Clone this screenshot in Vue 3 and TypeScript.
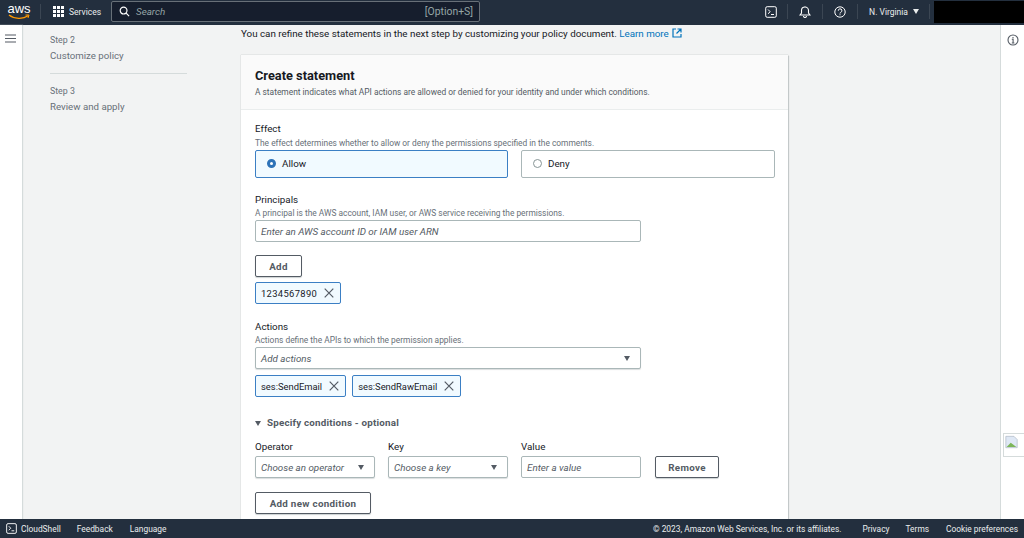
<script setup lang="ts">
const principals: string[] = ['1234567890']
const actions: string[] = ['ses:SendEmail', 'ses:SendRawEmail']
</script>

<template>
  <div class="page">
    <header class="top">
      <div class="logo">
        <span class="logo-text">aws</span>
        <svg class="smile" viewBox="0 0 22 6" width="22" height="6"><path d="M1 1c5 4 14 4.500 19 .8" fill="none" stroke="#f90" stroke-width="1.300"/><path d="M17.500 1h3.500l-1 3" fill="none" stroke="#f90" stroke-width="1"/></svg>
      </div>
      <span class="sep first"></span>
      <svg class="grid-ic" viewBox="0 0 11 11" width="11" height="11" fill="#fff"><rect x="0" y="0" width="3" height="3"/><rect x="4" y="0" width="3" height="3"/><rect x="8" y="0" width="3" height="3"/><rect x="0" y="4" width="3" height="3"/><rect x="4" y="4" width="3" height="3"/><rect x="8" y="4" width="3" height="3"/><rect x="0" y="8" width="3" height="3"/><rect x="4" y="8" width="3" height="3"/><rect x="8" y="8" width="3" height="3"/></svg>
      <span class="services">Services</span>
      <div class="search">
        <svg viewBox="0 0 12 12" width="11" height="11" fill="none" stroke="#fff" stroke-width="1.300"><circle cx="5" cy="5" r="3.700"/><path d="M7.800 7.800 11 11"/></svg>
        <span class="search-ph">Search</span>
        <span class="shortcut">[Option+S]</span>
      </div>
      <div class="top-right">
        <svg class="t-ic term" viewBox="0 0 12 12" width="12" height="12" fill="none" stroke="#fff" stroke-width="1"><rect x=".7" y=".7" width="10.600" height="10.600" rx="1.500"/><path d="M3 3.500 5.200 5.700 3 7.800M6 8.500h3"/></svg>
        <span class="sep"></span>
        <svg class="t-ic" viewBox="0 0 12 12" width="12" height="12" fill="none" stroke="#fff" stroke-width="1.100"><path d="M1 9h10L9.500 7V4.500a3.500 3.500 0 0 0-7 0V7zM6 1V.2M4.500 10a1.500 1.500 0 0 0 3 0"/></svg>
        <span class="sep"></span>
        <svg class="t-ic" viewBox="0 0 12 12" width="12" height="12" fill="none" stroke="#fff" stroke-width="1"><circle cx="6" cy="6" r="5.200"/><path d="M4.300 4.700a1.800 1.800 0 1 1 2.500 1.600c-.6.300-.8.600-.8 1.200M6 8.300v1"/></svg>
        <span class="sep"></span>
        <span class="region">N. Virginia</span>
        <span class="caret white"></span>
        <span class="sep"></span>
        <div class="account"></div>
      </div>
    </header>

    <div class="body">
      <aside class="rail">
        <svg viewBox="0 0 11 9" width="11" height="9" stroke="#545b64" stroke-width="1.200"><path d="M0 1h11M0 4.500h11M0 8h11"/></svg>
      </aside>

      <nav class="steps">
        <div class="step-no">Step 2</div>
        <div class="step-name">Customize policy</div>
        <div class="step-line"></div>
        <div class="step-no">Step 3</div>
        <div class="step-name">Review and apply</div>
      </nav>

      <main class="main">
        <p class="intro">
          You can refine these statements in the next step by customizing your policy document.
          <a class="link">Learn more
            <svg viewBox="0 0 10 10" width="10" height="10" fill="none" stroke="#0073bb" stroke-width="1.200"><path d="M4 1H1v8h8V6M5.500 1H9v3.500M9 1 4.500 5.500"/></svg>
          </a>
        </p>

        <section class="card">
          <div class="card-head">
            <h2>Create statement</h2>
            <p>A statement indicates what API actions are allowed or denied for your identity and under which conditions.</p>
          </div>
          <div class="card-body">
            <div class="label">Effect</div>
            <div class="hint">The effect determines whether to allow or deny the permissions specified in the comments.</div>
            <div class="radios">
              <div class="radio-box on"><span class="dot on"></span>Allow</div>
              <div class="radio-box"><span class="dot"></span>Deny</div>
            </div>

            <div class="label principals">Principals</div>
            <div class="hint">A principal is the AWS account, IAM user, or AWS service receiving the permissions.</div>
            <div class="field wide"><span class="ph">Enter an AWS account ID or IAM user ARN</span></div>
            <button class="btn add">Add</button>
            <div class="tokens one">
              <span v-for="p in principals" :key="p" class="token">{{ p }}
                <svg viewBox="0 0 10 10" width="10" height="10" stroke="#545b64" stroke-width="1.200"><path d="M.7.7l8.600 8.600M9.300.7.700 9.300"/></svg>
              </span>
            </div>

            <div class="label actions">Actions</div>
            <div class="hint">Actions define the APIs to which the permission applies.</div>
            <div class="field wide sel"><span class="ph">Add actions</span><span class="caret"></span></div>
            <div class="tokens two">
              <span v-for="a in actions" :key="a" class="token">{{ a }}
                <svg viewBox="0 0 10 10" width="10" height="10" stroke="#545b64" stroke-width="1.200"><path d="M.7.7l8.600 8.600M9.300.7.700 9.300"/></svg>
              </span>
            </div>

            <div class="expander"><span class="caret"></span>Specify conditions - optional</div>

            <div class="cond">
              <div class="cond-label">Operator</div>
              <div class="cond-label">Key</div>
              <div class="cond-label">Value</div>
              <div></div>
              <div class="field sel"><span class="ph">Choose an operator</span><span class="caret"></span></div>
              <div class="field sel"><span class="ph">Choose a key</span><span class="caret"></span></div>
              <div class="field"><span class="ph">Enter a value</span></div>
              <button class="btn remove">Remove</button>
            </div>
            <button class="btn new">Add new condition</button>
          </div>
        </section>
      </main>

      <aside class="info">
        <svg viewBox="0 0 12 12" width="12" height="12" fill="none" stroke="#545b64" stroke-width="1.100"><circle cx="6" cy="6" r="5"/><path d="M4.800 5.300H6.100V9M4.800 9h2.600M6 3v1.200"/></svg>
        <div class="broken">
          <svg viewBox="0 0 16 16" width="13" height="14"><path d="M1 1h10l4 4v10H1z" fill="#dfe8f5" stroke="#a9b4c0" stroke-width=".8"/><path d="M2 14l5-5 3 2 4 3z" fill="#7cb55a"/></svg>
        </div>
      </aside>
    </div>

    <footer class="foot">
      <svg viewBox="0 0 12 12" width="11" height="11" fill="none" stroke="#fff" stroke-width="1"><rect x=".7" y=".7" width="10.600" height="10.600" rx="1.500"/><path d="M3 3.500 5.200 5.700 3 7.800M6 8.500h3"/></svg>
      <span class="f-cs">CloudShell</span>
      <span class="f-fb">Feedback</span>
      <span class="f-lang">Language</span>
      <span class="f-copy">© 2023, Amazon Web Services, Inc. or its affiliates.</span>
      <span class="f-priv">Privacy</span>
      <span class="f-terms">Terms</span>
      <span class="f-cookie">Cookie preferences</span>
    </footer>
  </div>
</template>

<style>
html, body { margin: 0; overflow: hidden; }
</style>

<style scoped>
.page {
  width: 1024px;
  height: 538px;
  display: flex;
  flex-direction: column;
  overflow: hidden;
  font-family: Roboto, "Liberation Sans", sans-serif;
  color: #16191f;
  background: #f2f3f3;
}
.top {
  height: 25px;
  flex: none;
  box-sizing: border-box;
  background: #232f3e;
  display: flex;
  align-items: center;
  padding-bottom: 2px;
  color: #eaeded;
  font-size: 8.500px;
}
.logo { width: 22px; margin-left: 8px; display: flex; flex-direction: column; align-items: center; }
.logo-text { font: 13px/10px "Liberation Sans", sans-serif; color: #fff; }
.smile { display: block; }
.sep { width: 1px; height: 15px; background: #3b4653; }
.sep.first { margin: 0 12px 0 10px; }
.services { margin-left: 5px; width: 31px; white-space: nowrap; }
.search {
  margin-left: 11px;
  width: 369px;
  height: 21px;
  box-sizing: border-box;
  background: #161e2d;
  border: 1px solid #687078;
  border-radius: 2px;
  display: flex;
  align-items: center;
  padding: 0 6px 0 7px;
  color: #95a5a6;
}
.search-ph { margin-left: 6px; font-style: italic; font-size: 9.800px; }
.shortcut { margin-left: auto; font-size: 10.400px; }
.top-right { margin-left: auto; display: flex; align-items: center; height: 23px; }
.t-ic { margin: 0 11px; }
.t-ic.term { margin: 0 10px 0 12px; }
.region { margin: 0 5px 0 11px; }
.caret { width: 0; height: 0; border-left: 3.500px solid transparent; border-right: 3.500px solid transparent; border-top: 5px solid #545b64; display: inline-block; }
.caret.white { border-top-color: #eaeded; margin-right: 10px; }
.account { width: 90px; height: 22px; margin: 0 0 0 4px; background: #000; }

.body { flex: 1; display: flex; min-height: 0; }
.rail { width: 23px; flex: none; box-sizing: border-box; background: #fff; border-right: 1px solid #d5dbdb; padding: 9px 0 0 5px; box-shadow: 0 0 1px #d5dbdb; }
.rail svg { display: block; }
.steps { width: 218px; flex: none; box-sizing: border-box; padding: 9px 54px 0 27px; color: #687078; }
.step-no { font-size: 8.800px; line-height: 12px; }
.step-name { font-size: 9.700px; line-height: 14px; margin-top: 3px; color: #687078; }
.step-line { height: 1px; background: #d5dbdb; margin: 10px 0 11px; }

.main { width: 547px; flex: none; }
.intro { margin: 2px 0 0; font-size: 9.800px; line-height: 14px; color: #16191f; white-space: nowrap; }
.link { color: #0073bb; }
.link svg { vertical-align: -1px; margin-left: 1px; }

.card { margin-top: 14px; background: #fff; box-shadow: 0 0 1px rgba(0,28,36,.3), 1px 1px 1px rgba(0,28,36,.15); height: 480px; }
.card-head { height: 55px; box-sizing: border-box; background: #fafafa; border-bottom: 1px solid #eaeded; padding: 13px 14px 0; }
.card-head h2 { margin: 0; font-size: 12.800px; line-height: 15px; font-weight: 700; }
.card-head p { margin: 3px 0 0; font-size: 8.400px; line-height: 12px; white-space: nowrap; color: #545b64; }
.card-body { padding: 13px 14px 0; }
.label { font-size: 9.800px; line-height: 12px; color: #16191f; }
.hint { font-size: 8.400px; line-height: 12px; margin-top: 2px; color: #687078; white-space: nowrap; }
.radios { display: grid; grid-template-columns: 253px 254px; column-gap: 13px; margin-top: 1px; }
.radio-box { height: 28px; box-sizing: border-box; border: 1px solid #aab7b8; border-radius: 2px; display: flex; align-items: center; padding-left: 11px; padding-bottom: 1px; font-size: 9.800px; background: #fff; }
.radio-box.on { background: #f1faff; border-color: #3b7fc4; }
.dot { width: 9px; height: 9px; box-sizing: border-box; border: 1px solid #879596; border-radius: 50%; margin-right: 6px; background: #fff; }
.dot.on { border: 3px solid #2e73b8; }
.principals { margin-top: 16px; }
.principals + .hint, .actions + .hint { margin-top: 1px; }
.field { height: 22px; box-sizing: border-box; border: 1px solid #aab7b8; border-radius: 2px; background: #fff; display: flex; align-items: center; justify-content: space-between; padding: 0 10px 0 5px; font-size: 9.800px; }
.field.wide { width: 386px; margin-top: 1px; }
.sel { box-shadow: 0 1px 1px rgba(0,28,36,.15); }
.ph { font-style: italic; color: #545b64; white-space: nowrap; }
.btn { display: block; box-sizing: border-box; height: 22px; padding: 0; border: 1px solid #545b64; border-radius: 2px; background: #fff; font: 700 9.800px Roboto, "Liberation Sans", sans-serif; letter-spacing: .3px; color: #545b64; box-shadow: 0 1px 1px rgba(0,28,36,.2); }
.add { width: 47px; margin-top: 13px; }
.tokens { display: flex; gap: 6px; }
.tokens.one { margin-top: 5px; letter-spacing: .35px; }
.tokens.two { margin-top: 6px; }
.token { height: 22px; box-sizing: border-box; display: flex; align-items: center; gap: 7px; padding: 0 6px 0 5px; border: 1px solid #3b7fc4; border-radius: 2px; background: #f1faff; font-size: 9.400px; white-space: nowrap; }
.actions { margin-top: 17px; }
.expander { margin-top: 20px; font-size: 9.800px; line-height: 12px; font-weight: 700; letter-spacing: .2px; color: #545b64; display: flex; align-items: center; gap: 6px; }
.cond { display: grid; grid-template-columns: 120px 120px 120px 65px; column-gap: 13px; margin-top: 12px; }
.cond .remove { margin-left: 1px; }
.cond-label { font-size: 9.800px; line-height: 12px; margin-bottom: 3px; }
.new { width: 116px; margin-top: 14px; }

.info { flex: 1; position: relative; box-sizing: border-box; background: #fff; border-left: 1px solid #d5dbdb; margin-left: 212px; padding: 9px 0 0 6px; }
.info > svg { display: block; }
.broken { position: absolute; left: 2px; top: 408px; width: 24px; height: 24px; box-sizing: border-box; border: 1px solid #d5dbdb; border-right: 0; background: #fff; padding: 1px; }
.broken svg { display: block; }

.foot { height: 19px; flex: none; background: #232f3e; color: #eaeded; font-size: 8.400px; display: flex; align-items: center; padding-left: 6px; white-space: nowrap; }
.f-cs { margin-left: 4px; }
.f-fb { margin-left: 16px; }
.f-lang { margin-left: 17px; }
.f-copy { margin-left: auto; }
.f-priv { margin-left: 21px; }
.f-terms { margin-left: 16px; }
.f-cookie { margin-left: 17px; margin-right: 6px; }
</style>
